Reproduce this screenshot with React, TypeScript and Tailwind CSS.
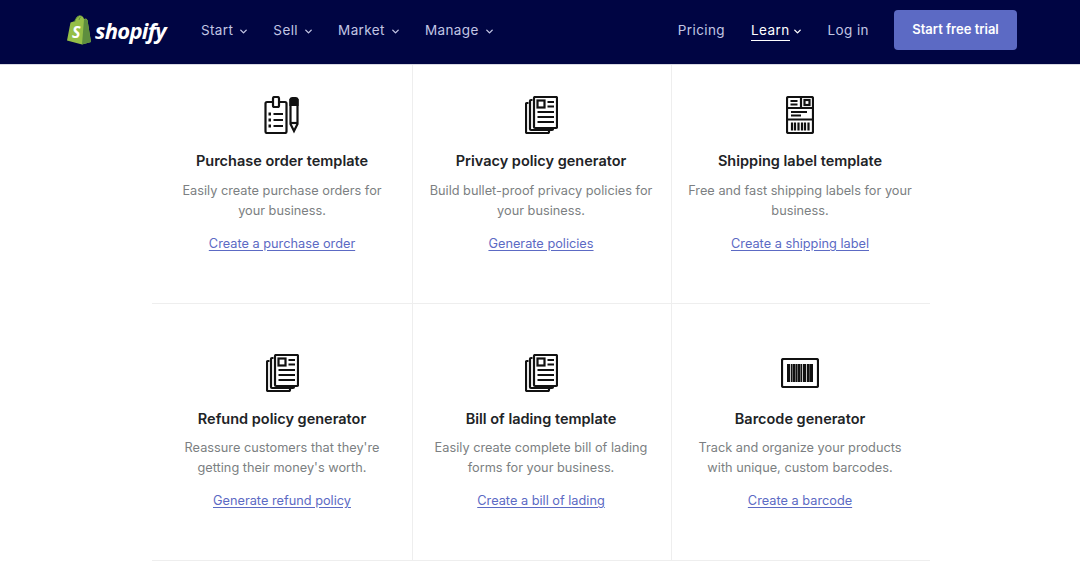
import { ChevronDown } from "lucide-react";
import type { ReactNode } from "react";

const font = "font-['Inter','Liberation_Sans',sans-serif]";

function ClipboardIcon() {
  return (
    <svg width="36" height="38" viewBox="0 0 36 38" fill="none" stroke="#111" strokeWidth="2.200">
      <rect x="1.500" y="6" width="21" height="31" rx="1.500" fill="#fff" />
      <rect x="9" y="1" width="6" height="10" rx="1.500" fill="#fff" />
      <path d="M9.500 18H19M9.500 24H19M9.500 30H19" />
      <path d="M4.500 18h2.500M4.500 24h2.500M4.500 30h2.500" strokeWidth="3" />
      <path d="M28.500 2h3a2 2 0 0 1 2 2v24L30 35l-3.500-7V4a2 2 0 0 1 2-2z" />
      <path d="M26.500 4h7v5h-7z" fill="#111" />
      <path d="M26.500 27h7" />
    </svg>
  );
}

function DocsIcon() {
  return (
    <svg width="33" height="38" viewBox="0 0 33 38" fill="none" stroke="#111" strokeWidth="2.200">
      <path d="M3.500 7H2a1 1 0 0 0-1 1v28a1 1 0 0 0 1 1h21a1 1 0 0 0 1-1v-1" />
      <path d="M7.500 4H6a1 1 0 0 0-1 1v28a1 1 0 0 0 1 1h21a1 1 0 0 0 1-1v-1" />
      <rect x="9" y="1" width="23" height="31" rx="1" fill="#fff" />
      <rect x="12.500" y="4.500" width="7" height="7" />
      <path d="M22.500 6h6.500M22.500 10.500h6.500M12.500 16H29M12.500 21H29M12.500 26H29" />
    </svg>
  );
}

function LabelIcon() {
  return (
    <svg width="28" height="38" viewBox="0 0 28 38" fill="none" stroke="#111" strokeWidth="2.200">
      <rect x="1" y="1" width="26" height="36" rx="1.500" />
      <path d="M1 12h26M1 23.500h26M15 1v11" />
      <path d="M4.500 5h7M4.500 8.500h7M5 16h16M5 19.500h10" />
      <rect x="18.500" y="4" width="5" height="5" />
      <path d="M6 26.500v8M9 26.500v8M12.500 26.500v8M16 26.500v8M19 26.500v8M22.500 26.500v8" strokeWidth="2.200" />
    </svg>
  );
}

function BarcodeIcon() {
  return (
    <svg width="38" height="30" viewBox="0 0 38 30" fill="none" stroke="#111" strokeWidth="2.200">
      <rect x="1" y="1" width="36" height="28" rx="1.500" />
      <path d="M7.500 6v18M13 6v18M18 6v18M23.500 6v18M30.500 6v18" strokeWidth="3" />
      <path d="M10.500 6v18M15.500 6v18M20.500 6v18M26.500 6v18M28 6v18" strokeWidth="1.500" />
    </svg>
  );
}

function ShopifyBag() {
  return (
    <svg width="26" height="30" viewBox="0 0 26 30">
      <path d="M1 25.500 4.500 7.500 9 6c1-4 3-5.500 5-5.500 2.500 0 3.500 2 4 3.500l2-.5 1.500 1.500L25 27l-9 2.500z" fill="#95bf47" />
      <path d="m16 29.500 9-2.500-3.500-21.500-1.500-1.500-2 .5z" fill="#5e8e3e" />
      <path d="M8.500 7c.5-2.500 2-5 4.500-5.500M13 5c.3-1.500 1-3 2.500-3.500" stroke="#5e8e3e" strokeWidth="1" fill="none" />
      <text x="6" y="23" fontSize="16" fontWeight="700" fontStyle="italic" fill="#fff" fontFamily="Open Sans, sans-serif">S</text>
    </svg>
  );
}

function NavLink({ label, menu, active }: { label: string; menu?: boolean; active?: boolean }) {
  return (
    <a className={`flex items-center pt-[2px] text-[13.500px] leading-none tracking-[0.4px] ${active ? "gap-[2px] text-white" : "gap-[5px] text-[#c2c5e3]"}`}>
      <span className={active ? "border-b border-white pb-[2px] pt-[3px]" : ""}>{label}</span>
      {menu && <ChevronDown size={11} strokeWidth={3} />}
    </a>
  );
}

function Card({ icon, title, text, link, pad, descGap = "mt-[10px]", last }: { icon: ReactNode; title: string; text: ReactNode; link: string; pad: string; descGap?: string; last?: boolean }) {
  return (
    <div className={`flex flex-col items-center ${pad} ${last ? "" : "border-r border-[#eeeeee]"}`}>
      <div className="flex h-[38px] items-center justify-center">{icon}</div>
      <h3 className="mt-[17px] text-[14.500px] font-semibold leading-[20px] text-[#212326]">{title}</h3>
      <p className={`${descGap} text-center text-[12.750px] leading-[20px] text-[#7c7f82]`}>{text}</p>
      <a className="mt-[13px] text-[12.750px] leading-[20px] text-[#5c6ac4] underline underline-offset-2">{link}</a>
    </div>
  );
}

export default function App() {
  return (
    <div className={`h-[561px] w-[1080px] overflow-hidden bg-white ${font}`}>
      <header className="flex h-[65px] items-center justify-between border-b border-[#d9d9e3] bg-[#000543] pb-[4px] pl-[66px] pr-[63px]">
        <div className="flex items-center">
          <div className="flex items-center gap-[3px]">
            <ShopifyBag />
            <span className="font-['Open_Sans',sans-serif] text-[22px] font-bold italic leading-none tracking-[-0.7px] text-white">shopify</span>
          </div>
          <nav className="ml-[35px] flex items-center gap-[24px]">
            <NavLink label="Start" menu />
            <NavLink label="Sell" menu />
            <NavLink label="Market" menu />
            <NavLink label="Manage" menu />
          </nav>
        </div>
        <div className="flex items-center">
          <NavLink label="Pricing" />
          <div className="ml-[26px]"><NavLink label="Learn" menu active /></div>
          <div className="ml-[25px]"><NavLink label="Log in" /></div>
          <a className="ml-[25px] flex h-[40px] w-[123px] items-center justify-center rounded-[4px] bg-[#5c6ac4] text-[13px] font-semibold text-white">Start free trial</a>
        </div>
      </header>
      <main className="ml-[152px] w-[778px]">
        <div className="grid h-[239px] grid-cols-[261px_259px_258px] border-b border-[#eeeeee]">
          <Card pad="pt-[31px]" icon={<ClipboardIcon />} title="Purchase order template" text={<>Easily create purchase orders for<br />your business.</>} link="Create a purchase order" />
          <Card pad="pt-[31px] pr-[2px]" icon={<DocsIcon />} title="Privacy policy generator" text={<>Build bullet-proof privacy policies for<br />your business.</>} link="Generate policies" />
          <Card pad="pt-[31px] pr-[2px]" last icon={<LabelIcon />} title="Shipping label template" text={<>Free and fast shipping labels for your<br />business.</>} link="Create a shipping label" />
        </div>
        <div className="grid h-[257px] grid-cols-[261px_259px_258px] border-b border-[#eeeeee]">
          <Card pad="pt-[50px]" descGap="mt-[9px]" icon={<DocsIcon />} title="Refund policy generator" text={<>Reassure customers that they're<br />getting their money's worth.</>} link="Generate refund policy" />
          <Card pad="pt-[50px] pr-[2px]" descGap="mt-[9px]" icon={<DocsIcon />} title="Bill of lading template" text={<>Easily create complete bill of lading<br />forms for your business.</>} link="Create a bill of lading" />
          <Card pad="pt-[50px] pr-[2px]" descGap="mt-[9px]" last icon={<BarcodeIcon />} title="Barcode generator" text={<>Track and organize your products<br />with unique, custom barcodes.</>} link="Create a barcode" />
        </div>
      </main>
    </div>
  );
}
